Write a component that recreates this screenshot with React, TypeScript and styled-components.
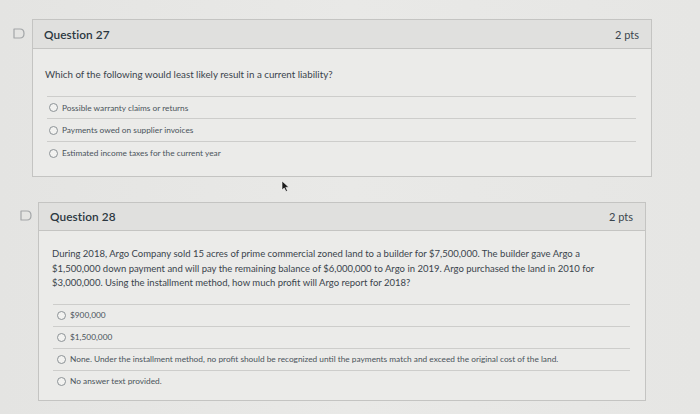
import React from "react";
import styled, { createGlobalStyle } from "styled-components";

const Global = createGlobalStyle`
  html, body { margin: 0; padding: 0; }
  body {
    width: 700px;
    height: 414px;
    overflow: hidden;
    background: linear-gradient(90deg, #e4e4e2 0%, #e9e9e7 50%, #e6e6e4 100%);
    font-family: Lato, "Open Sans", sans-serif;
    color: #2d3b45;
  }
`;

const Page = styled.div`
  position: relative;
  width: 700px;
  height: 414px;
  display: flex;
  flex-direction: column;
`;

const Row = styled.div<{ $left: number; $top: number }>`
  display: flex;
  align-items: flex-start;
  margin-left: ${(p) => p.$left}px;
  margin-top: ${(p) => p.$top}px;
`;

const FlagBox = styled.div<{ $gap: number; $offset: number }>`
  width: 12px;
  margin-right: ${(p) => p.$gap}px;
  margin-top: ${(p) => p.$offset}px;
  display: flex;
`;

const Card = styled.div<{ $width: number; $height: number }>`
  width: ${(p) => p.$width}px;
  height: ${(p) => p.$height}px;
  box-sizing: border-box;
  border: 1px solid #c4c4c2;
  background: #ebebe9;
  display: flex;
  flex-direction: column;
`;

const Header = styled.div<{ $height: number; $pad: number }>`
  height: ${(p) => p.$height}px;
  flex: none;
  box-sizing: border-box;
  background: #e0e0de;
  border-bottom: 1px solid #c4c4c2;
  display: flex;
  align-items: center;
  justify-content: space-between;
  padding: 0 12px 0 ${(p) => p.$pad}px;
`;

const Title = styled.div`
  font-size: 11.8px;
  font-weight: 600;
  color: #2b3740;
  letter-spacing: 0.1px;
`;

const Points = styled.div`
  font-size: 11px;
  color: #3a454d;
`;

const Body = styled.div<{ $pt: number; $pad: number }>`
  padding: ${(p) => p.$pt}px 15px 0 ${(p) => p.$pad}px;
  display: flex;
  flex-direction: column;
`;

const Prompt = styled.p<{ $size: number; $lh: number; $mb: number }>`
  margin: 0 0 ${(p) => p.$mb}px 0;
  font-size: ${(p) => p.$size}px;
  line-height: ${(p) => p.$lh}px;
  color: #3a444c;
  white-space: nowrap;
`;

const Answers = styled.div<{ $ml: number }>`
  margin-left: ${(p) => p.$ml}px;
  display: flex;
  flex-direction: column;
`;

const Answer = styled.label<{ $h: number; $indent: number }>`
  height: ${(p) => p.$h}px;
  box-sizing: border-box;
  border-top: 1px solid #cdcdcb;
  display: flex;
  align-items: center;
  padding-left: ${(p) => p.$indent}px;
  font-size: 8.3px;
  color: #4a545b;
  gap: 4px;
  white-space: nowrap;
`;

const Radio = styled.span`
  width: 7px;
  height: 7px;
  border-radius: 50%;
  border: 1px solid #8c9296;
  background: #f2f2f0;
  flex: none;
`;

const Cursor = styled.svg`
  position: absolute;
  left: 281px;
  top: 180px;
`;

function Flag() {
  return (
    <svg width="12" height="11" viewBox="0 0 12 11">
      <path
        d="M1 1 H7 Q11 1 11 5.5 Q11 10 7 10 H1 Z"
        fill="none"
        stroke="#a3a6a8"
        strokeWidth="1.2"
        strokeLinejoin="round"
      />
    </svg>
  );
}

export default function App() {
  return (
    <Page>
      <Global />
      <Row $left={13} $top={19}>
        <FlagBox $gap={7} $offset={9}>
          <Flag />
        </FlagBox>
        <Card $width={620} $height={158}>
          <Header $height={29} $pad={11}>
            <Title>Question 27</Title>
            <Points>2 pts</Points>
          </Header>
          <Body $pt={20} $pad={12}>
            <Prompt $size={9.75} $lh={11} $mb={16}>
              Which of the following would least likely result in a current liability?
            </Prompt>
            <Answers $ml={2}>
              <Answer $h={22} $indent={2}>
                <Radio />
                Possible warranty claims or returns
              </Answer>
              <Answer $h={23} $indent={2}>
                <Radio />
                Payments owed on supplier invoices
              </Answer>
              <Answer $h={23} $indent={2}>
                <Radio />
                Estimated income taxes for the current year
              </Answer>
            </Answers>
          </Body>
        </Card>
      </Row>
      <Row $left={20} $top={25}>
        <FlagBox $gap={6} $offset={8}>
          <Flag />
        </FlagBox>
        <Card $width={608} $height={199}>
          <Header $height={28} $pad={11}>
            <Title>Question 28</Title>
            <Points>2 pts</Points>
          </Header>
          <Body $pt={16} $pad={13}>
            <Prompt $size={9.5} $lh={14.5} $mb={13}>
              During 2018, Argo Company sold 15 acres of prime commercial zoned land to a builder for $7,500,000. The builder gave Argo a
              <br />
              $1,500,000 down payment and will pay the remaining balance of $6,000,000 to Argo in 2019. Argo purchased the land in 2010 for
              <br />
              $3,000,000. Using the installment method, how much profit will Argo report for 2018?
            </Prompt>
            <Answers $ml={1}>
              <Answer $h={22} $indent={4}>
                <Radio />
                $900,000
              </Answer>
              <Answer $h={22} $indent={4}>
                <Radio />
                $1,500,000
              </Answer>
              <Answer $h={22} $indent={4}>
                <Radio />
                None. Under the installment method, no profit should be recognized until the payments match and exceed the original cost of the land.
              </Answer>
              <Answer $h={22} $indent={4}>
                <Radio />
                No answer text provided.
              </Answer>
            </Answers>
          </Body>
        </Card>
      </Row>
      <Cursor width="9" height="12" viewBox="0 0 9 12">
        <path d="M1 1 L1 10 L3.2 8 L5 11.5 L6.5 10.8 L4.8 7.4 L7.8 7.2 Z" fill="#1c1c1c" stroke="#fff" strokeWidth="0.6" />
      </Cursor>
    </Page>
  );
}
